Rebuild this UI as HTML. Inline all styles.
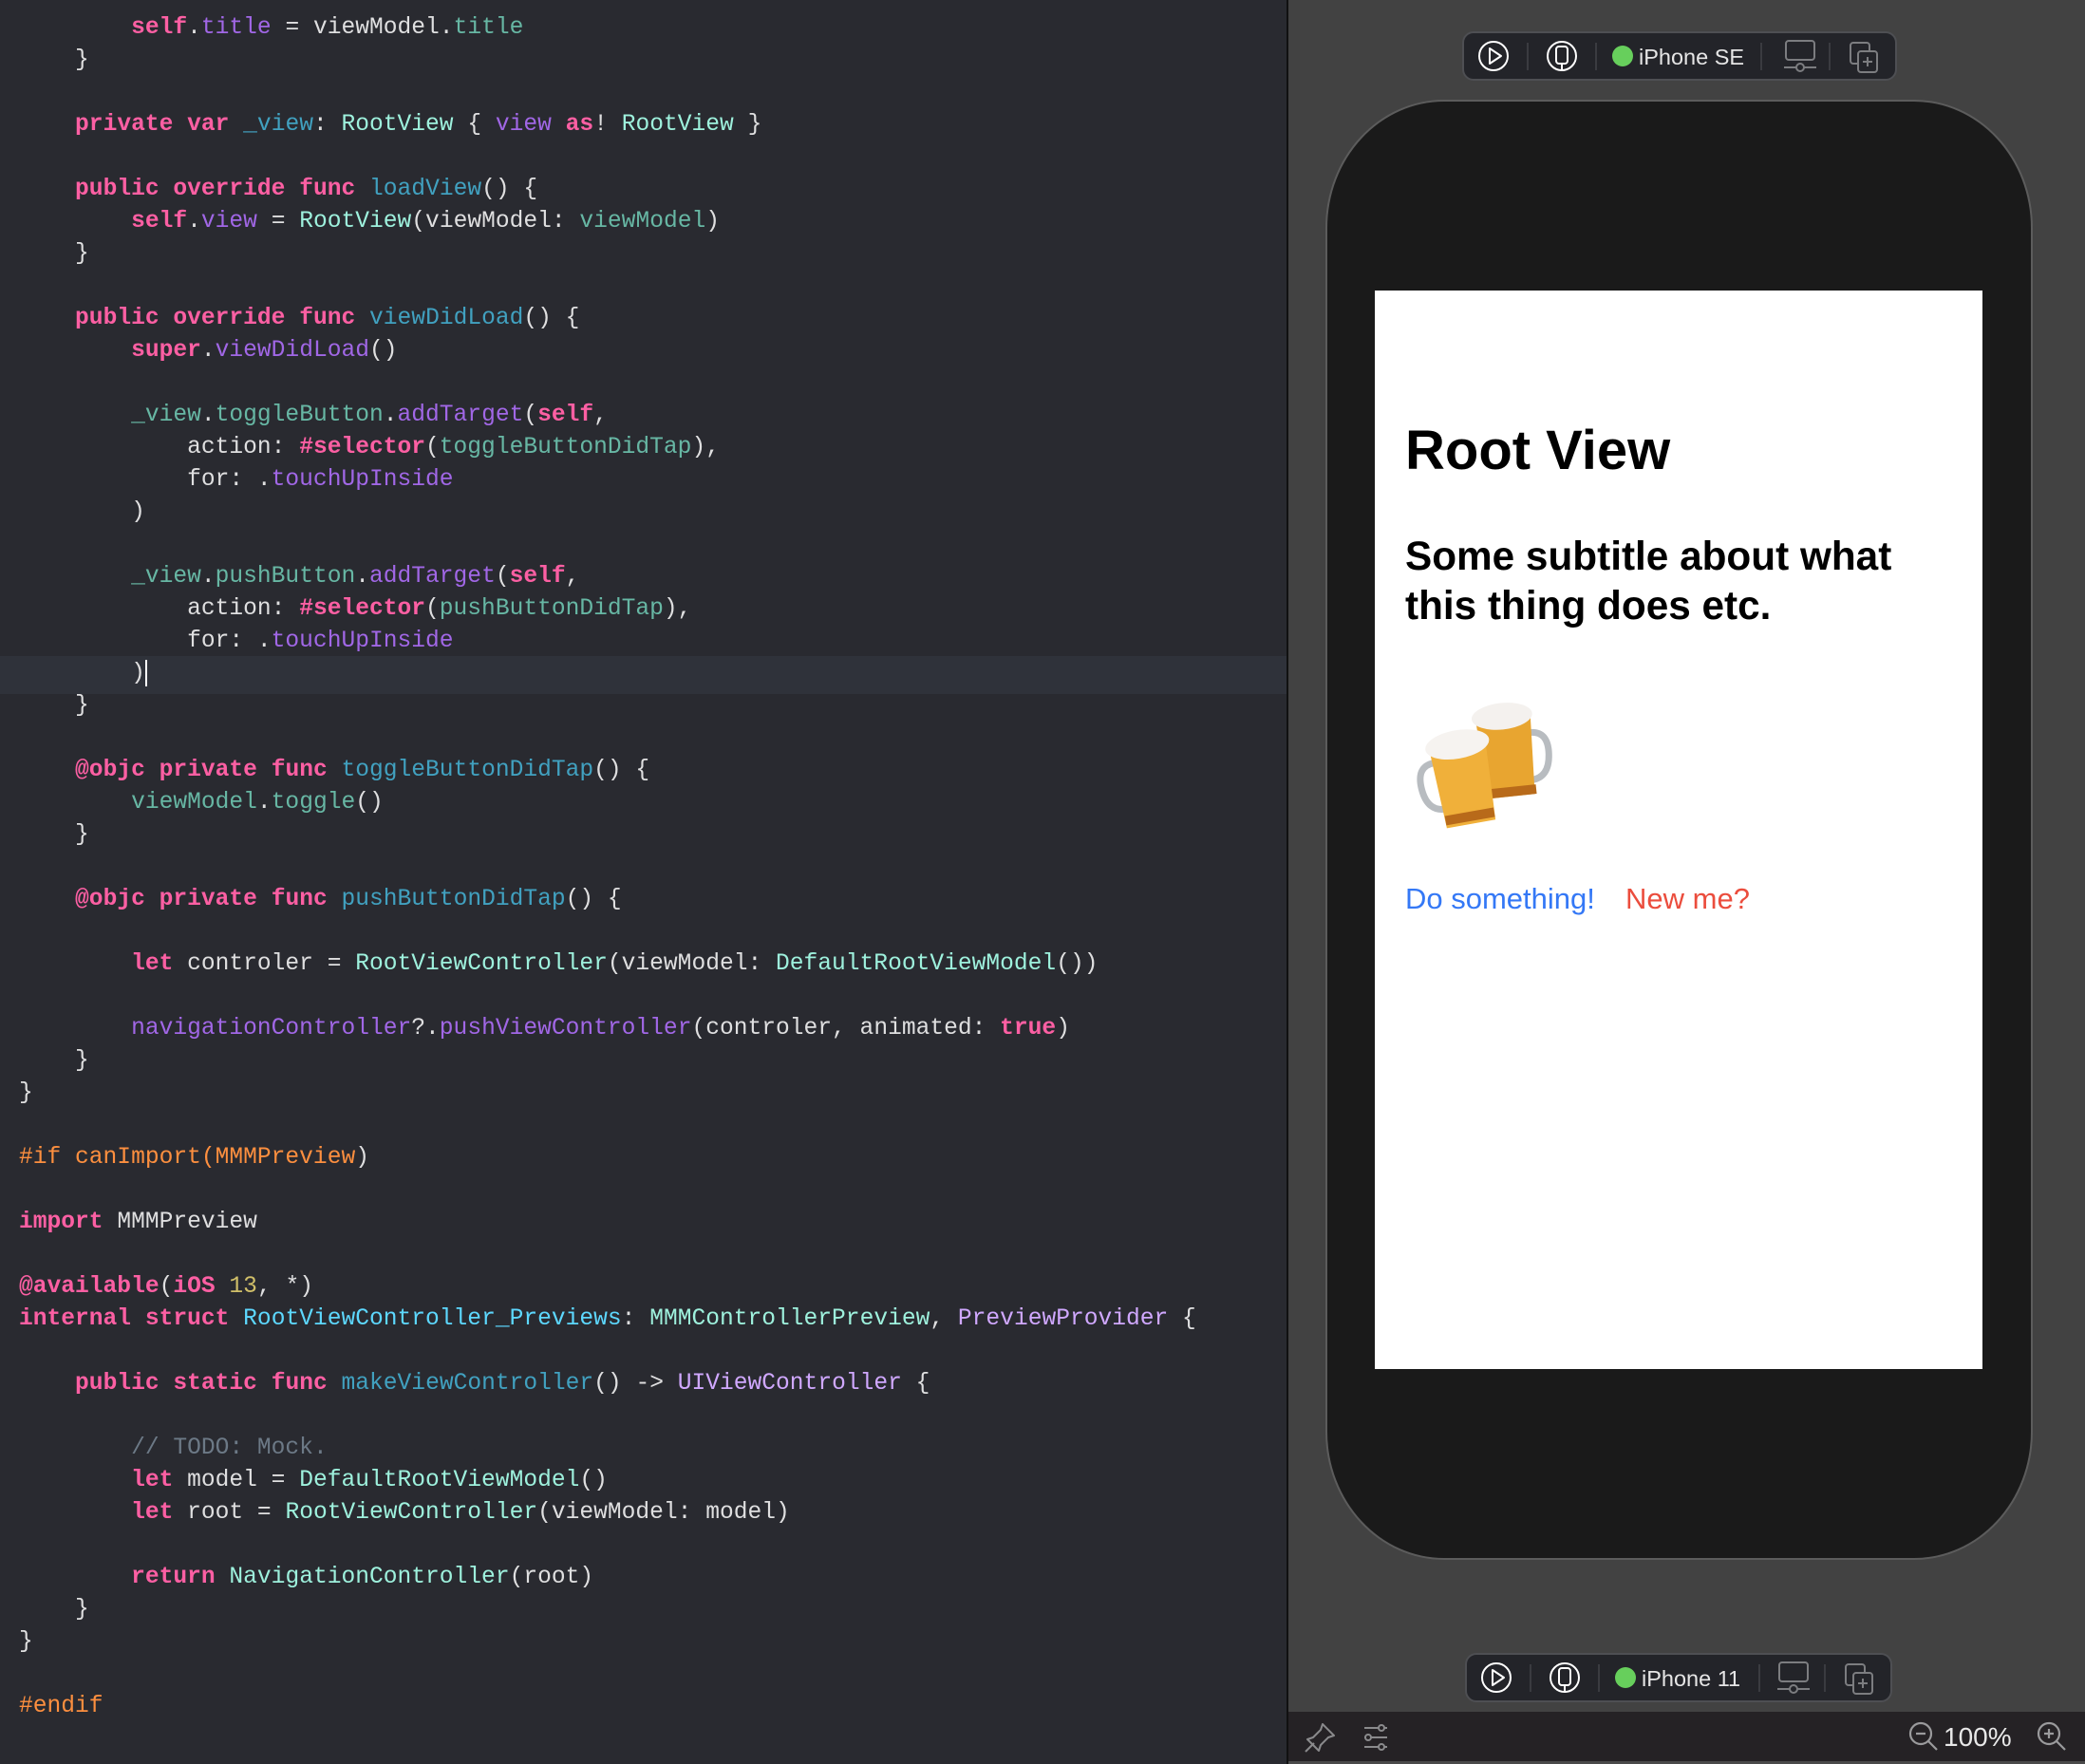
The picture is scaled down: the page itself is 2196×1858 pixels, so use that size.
<!DOCTYPE html>
<html><head><meta charset="utf-8">
<style>
*{margin:0;padding:0;box-sizing:border-box}
body{width:2196px;height:1858px;overflow:hidden;background:#292a30;position:relative;font-family:"Liberation Sans",sans-serif}
#code{position:absolute;left:0;top:0;width:1355px;height:1858px;background:#292a30}
.l{position:absolute;left:20px;height:34px;line-height:34px;font-family:"Liberation Mono",monospace;font-size:24.6px;color:#dfdfe0;white-space:pre;margin-top:3px}
.k{color:#fc5fa3;font-weight:bold}
.sp{color:#a167e6}
.st{color:#d0a8ff}
.pt{color:#9ef1dd}
.pp{color:#67b7a4}
.d{color:#41a1c0}
.pre{color:#fd8f3f}
.n{color:#d0bf69}
.c{color:#6c7986}
#hl{position:absolute;left:0;top:691px;width:1355px;height:40px;background:#2f323a}
#right{position:absolute;left:1355px;top:0;width:841px;height:1858px;background:#424242;border-left:2px solid #111}
#phone{position:absolute;left:1396px;top:105px;width:745px;height:1538px;background:#1a1a1a;border:2px solid #5c5c5c;border-radius:125px/135px}
#screen{position:absolute;left:1448px;top:306px;width:640px;height:1136px;background:#fff}
#bar{position:absolute;left:1357px;top:1803px;width:839px;height:52px;background:#252225}
#barl{position:absolute;left:1357px;top:1855px;width:839px;height:3px;background:#4a4a4a}
.tb{position:absolute}
</style></head><body>
<div id="code">
<div id="hl"></div>
<div class="l" style="top:10px">        <span class="k">self</span>.<span class="sp">title</span> = viewModel.<span class="pp">title</span></div>
<div class="l" style="top:44px">    }</div>
<div class="l" style="top:112px">    <span class="k">private</span> <span class="k">var</span> <span class="d">_view</span>: <span class="pt">RootView</span> { <span class="sp">view</span> <span class="k">as</span>! <span class="pt">RootView</span> }</div>
<div class="l" style="top:180px">    <span class="k">public</span> <span class="k">override</span> <span class="k">func</span> <span class="d">loadView</span>() {</div>
<div class="l" style="top:214px">        <span class="k">self</span>.<span class="sp">view</span> = <span class="pt">RootView</span>(viewModel: <span class="pp">viewModel</span>)</div>
<div class="l" style="top:248px">    }</div>
<div class="l" style="top:316px">    <span class="k">public</span> <span class="k">override</span> <span class="k">func</span> <span class="d">viewDidLoad</span>() {</div>
<div class="l" style="top:350px">        <span class="k">super</span>.<span class="sp">viewDidLoad</span>()</div>
<div class="l" style="top:418px">        <span class="pp">_view</span>.<span class="pp">toggleButton</span>.<span class="sp">addTarget</span>(<span class="k">self</span>,</div>
<div class="l" style="top:452px">            action: <span class="k">#selector</span>(<span class="pp">toggleButtonDidTap</span>),</div>
<div class="l" style="top:486px">            for: .<span class="sp">touchUpInside</span></div>
<div class="l" style="top:520px">        )</div>
<div class="l" style="top:588px">        <span class="pp">_view</span>.<span class="pp">pushButton</span>.<span class="sp">addTarget</span>(<span class="k">self</span>,</div>
<div class="l" style="top:622px">            action: <span class="k">#selector</span>(<span class="pp">pushButtonDidTap</span>),</div>
<div class="l" style="top:656px">            for: .<span class="sp">touchUpInside</span></div>
<div class="l" style="top:690px">        )<span style="display:inline-block;width:2px;height:28px;background:#fff;vertical-align:middle"></span></div>
<div class="l" style="top:724px">    }</div>
<div class="l" style="top:792px">    <span class="k">@objc</span> <span class="k">private</span> <span class="k">func</span> <span class="d">toggleButtonDidTap</span>() {</div>
<div class="l" style="top:826px">        <span class="pp">viewModel</span>.<span class="pp">toggle</span>()</div>
<div class="l" style="top:860px">    }</div>
<div class="l" style="top:928px">    <span class="k">@objc</span> <span class="k">private</span> <span class="k">func</span> <span class="d">pushButtonDidTap</span>() {</div>
<div class="l" style="top:996px">        <span class="k">let</span> controler = <span class="pt">RootViewController</span>(viewModel: <span class="pt">DefaultRootViewModel</span>())</div>
<div class="l" style="top:1064px">        <span class="sp">navigationController</span>?.<span class="sp">pushViewController</span>(controler, animated: <span class="k">true</span>)</div>
<div class="l" style="top:1098px">    }</div>
<div class="l" style="top:1132px">}</div>
<div class="l" style="top:1200px"><span class="pre">#if canImport(MMMPreview</span>)</div>
<div class="l" style="top:1268px"><span class="k">import</span> MMMPreview</div>
<div class="l" style="top:1336px"><span class="k">@available</span>(<span class="k">iOS</span> <span class="n">13</span>, *)</div>
<div class="l" style="top:1370px"><span class="k">internal</span> <span class="k">struct</span> <span class="d" style="color:#5dd8ff">RootViewController_Previews</span>: <span class="pt">MMMControllerPreview</span>, <span class="st">PreviewProvider</span> {</div>
<div class="l" style="top:1438px">    <span class="k">public</span> <span class="k">static</span> <span class="k">func</span> <span class="d">makeViewController</span>() -&gt; <span class="st">UIViewController</span> {</div>
<div class="l" style="top:1506px">        <span class="c">// TODO: Mock.</span></div>
<div class="l" style="top:1540px">        <span class="k">let</span> model = <span class="pt">DefaultRootViewModel</span>()</div>
<div class="l" style="top:1574px">        <span class="k">let</span> root = <span class="pt">RootViewController</span>(viewModel: model)</div>
<div class="l" style="top:1642px">        <span class="k">return</span> <span class="pt">NavigationController</span>(root)</div>
<div class="l" style="top:1676px">    }</div>
<div class="l" style="top:1710px">}</div>
<div class="l" style="top:1778px"><span class="pre">#endif</span></div>
</div>

<div id="right"></div>
<div id="phone"></div>
<div id="screen">
  <div style="position:absolute;left:32px;top:134px;font-size:58px;font-weight:bold;color:#000;line-height:70px">Root View</div>
  <div style="position:absolute;left:32px;top:254px;font-size:42.3px;font-weight:bold;color:#000;line-height:52px;width:560px">Some subtitle about what<br>this thing does etc.</div>
  <svg style="position:absolute;left:40px;top:418px" width="150" height="150" viewBox="0 0 150 150">
    <g transform="rotate(-6 100 70)">
      <path d="M125 50 q20 0 18 25 q-2 25 -22 25" fill="none" stroke="#b8bcc0" stroke-width="7"/>
      <path d="M70 30 h58 l-4 85 h-50z" fill="#e8a530"/>
      <rect x="72" y="105" width="54" height="10" fill="#b86a1a"/>
      <ellipse cx="98" cy="30" rx="32" ry="14" fill="#f4f1ee"/>
    </g>
    <g transform="rotate(-10 50 90)">
      <path d="M25 75 q-20 0 -18 25 q2 25 22 25" fill="none" stroke="#b8bcc0" stroke-width="7"/>
      <path d="M22 60 h60 l-4 85 h-52z" fill="#f0b03a"/>
      <rect x="26" y="132" width="52" height="10" fill="#b86a1a"/>
      <ellipse cx="52" cy="60" rx="34" ry="15" fill="#f6f3f0"/>
    </g>
  </svg>
  <div style="position:absolute;left:32px;top:621px;font-size:31px;color:#3478f6;line-height:40px">Do something!</div>
  <div style="position:absolute;left:264px;top:621px;font-size:31px;color:#eb4d3d;line-height:40px">New me?</div>
</div>

<!-- top toolbar -->
<svg class="tb" style="left:1540px;top:33px" width="458" height="52" viewBox="0 0 458 52">
  <rect x="1" y="1" width="456" height="50" rx="11" fill="#232429" stroke="#4e4f53" stroke-width="2"/>
  <circle cx="33" cy="26" r="15" fill="none" stroke="#fff" stroke-width="2"/>
  <path d="M29 18 L41 26 L29 34 Z" fill="none" stroke="#fff" stroke-width="2" stroke-linejoin="round"/>
  <line x1="69" y1="12" x2="69" y2="41" stroke="#3a3b40" stroke-width="2"/>
  <circle cx="105" cy="26" r="15" fill="none" stroke="#fff" stroke-width="2"/>
  <rect x="99" y="16" width="12" height="18" rx="3" fill="none" stroke="#fff" stroke-width="2"/>
  <line x1="105" y1="34" x2="105" y2="41" stroke="#fff" stroke-width="2"/>
  <line x1="141" y1="12" x2="141" y2="41" stroke="#3a3b40" stroke-width="2"/>
  <circle cx="169" cy="26" r="11" fill="#67cf5c"/>
  <text x="186" y="35" font-family="Liberation Sans, sans-serif" font-size="23.5" fill="#e6e6e6">iPhone SE</text>
  <line x1="315" y1="12" x2="315" y2="41" stroke="#3a3b40" stroke-width="2"/>
  <rect x="341" y="10" width="30" height="20" rx="3" fill="none" stroke="#7c7d80" stroke-width="2"/>
  <line x1="339" y1="38" x2="373" y2="38" stroke="#7c7d80" stroke-width="2"/>
  <circle cx="356" cy="38" r="4" fill="#232429" stroke="#7c7d80" stroke-width="2"/>
  <line x1="387" y1="12" x2="387" y2="41" stroke="#3a3b40" stroke-width="2"/>
  <rect x="409" y="12" width="20" height="22" rx="3" fill="none" stroke="#7c7d80" stroke-width="2"/>
  <rect x="417" y="21" width="20" height="22" rx="3" fill="#232429" stroke="#7c7d80" stroke-width="2"/>
  <path d="M427 27 v10 M422 32 h10" stroke="#7c7d80" stroke-width="2"/>
</svg>

<!-- bottom toolbar -->
<svg class="tb" style="left:1543px;top:1741px" width="450" height="52" viewBox="0 0 450 52">
  <rect x="1" y="1" width="448" height="50" rx="11" fill="#232429" stroke="#4e4f53" stroke-width="2"/>
  <circle cx="33" cy="26" r="15" fill="none" stroke="#fff" stroke-width="2"/>
  <path d="M29 18 L41 26 L29 34 Z" fill="none" stroke="#fff" stroke-width="2" stroke-linejoin="round"/>
  <line x1="69" y1="12" x2="69" y2="41" stroke="#3a3b40" stroke-width="2"/>
  <circle cx="105" cy="26" r="15" fill="none" stroke="#fff" stroke-width="2"/>
  <rect x="99" y="16" width="12" height="18" rx="3" fill="none" stroke="#fff" stroke-width="2"/>
  <line x1="105" y1="34" x2="105" y2="41" stroke="#fff" stroke-width="2"/>
  <line x1="141" y1="12" x2="141" y2="41" stroke="#3a3b40" stroke-width="2"/>
  <circle cx="169" cy="26" r="11" fill="#67cf5c"/>
  <text x="186" y="35" font-family="Liberation Sans, sans-serif" font-size="23.5" fill="#e6e6e6">iPhone 11</text>
  <line x1="310" y1="12" x2="310" y2="41" stroke="#3a3b40" stroke-width="2"/>
  <rect x="331" y="10" width="30" height="20" rx="3" fill="none" stroke="#7c7d80" stroke-width="2"/>
  <line x1="329" y1="38" x2="363" y2="38" stroke="#7c7d80" stroke-width="2"/>
  <circle cx="346" cy="38" r="4" fill="#232429" stroke="#7c7d80" stroke-width="2"/>
  <line x1="379" y1="12" x2="379" y2="41" stroke="#3a3b40" stroke-width="2"/>
  <rect x="401" y="12" width="20" height="22" rx="3" fill="none" stroke="#7c7d80" stroke-width="2"/>
  <rect x="409" y="21" width="20" height="22" rx="3" fill="#232429" stroke="#7c7d80" stroke-width="2"/>
  <path d="M419 27 v10 M414 32 h10" stroke="#7c7d80" stroke-width="2"/>
</svg>

<div id="bar"></div>
<div id="barl"></div>
<svg class="tb" style="left:1357px;top:1803px" width="839" height="52" viewBox="0 0 839 52">
  <g fill="none" stroke="#8a8a8c" stroke-width="2" stroke-linejoin="round">
    <path d="M36 13 l12 12 l-6 2 l-8 8 l-2 6 l-12 -12 l6 -2 l8 -8 z"/>
    <path d="M27 33 l-9 9"/>
    <path d="M80 17 h24 M80 27 h24 M80 37 h24"/>
  </g>
  <circle cx="98" cy="17" r="3" fill="#252225" stroke="#8a8a8c" stroke-width="2"/>
  <circle cx="84" cy="27" r="3" fill="#252225" stroke="#8a8a8c" stroke-width="2"/>
  <circle cx="98" cy="37" r="3" fill="#252225" stroke="#8a8a8c" stroke-width="2"/>
  <g fill="none" stroke="#9a9a9c" stroke-width="2.2">
    <circle cx="666" cy="23" r="11"/><path d="M674 31 l9 9 M661 23 h10"/>
    <circle cx="801" cy="23" r="11"/><path d="M809 31 l9 9 M796 23 h10 M801 18 v10"/>
  </g>
  <text x="690" y="36" font-family="Liberation Sans, sans-serif" font-size="28" fill="#e8e8e8">100%</text>
</svg>
</body></html>
